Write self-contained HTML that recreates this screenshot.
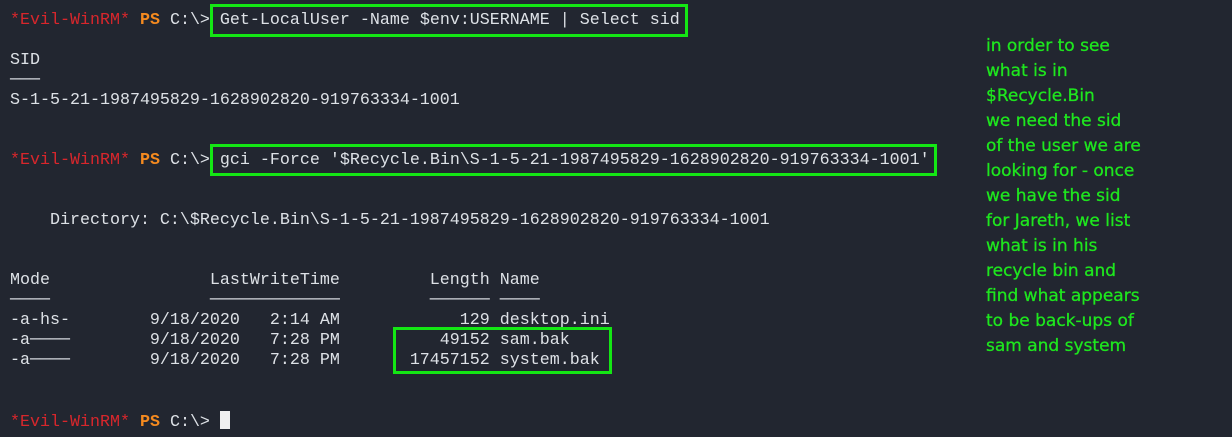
<!DOCTYPE html>
<html><head><meta charset="utf-8"><style>
html,body{margin:0;padding:0;background:#222630;width:1232px;height:437px;overflow:hidden;position:relative}
pre{position:absolute;left:10px;top:11px;margin:0;font-family:"Liberation Mono","DejaVu Sans Mono",monospace;font-size:16.67px;line-height:20px;color:#dde1e6}
.r{color:#d8262c}.o{color:#f58a1f;font-weight:bold}
.box{position:absolute;border:3px solid #14e614;box-sizing:border-box}
.note{position:absolute;left:986px;top:34px;font-family:"DejaVu Sans","Liberation Sans",sans-serif;font-size:17px;line-height:25px;color:#1ee61e;white-space:pre;-webkit-text-stroke:0.3px #1ee61e}
.cur{display:inline-block;width:10px;height:18px;background:#f0f0f0;vertical-align:-3px}
</style></head><body>
<pre><span class="r">*Evil-WinRM*</span> <span class="o">PS</span> C:\&gt; Get-LocalUser -Name $env:USERNAME | Select sid

SID
───
S-1-5-21-1987495829-1628902820-919763334-1001


<span class="r">*Evil-WinRM*</span> <span class="o">PS</span> C:\&gt; gci -Force '$Recycle.Bin\S-1-5-21-1987495829-1628902820-919763334-1001'


    Directory: C:\$Recycle.Bin\S-1-5-21-1987495829-1628902820-919763334-1001


Mode                LastWriteTime         Length Name
────                ─────────────         ────── ────
-a-hs-        9/18/2020   2:14 AM            129 desktop.ini
-a────        9/18/2020   7:28 PM          49152 sam.bak
-a────        9/18/2020   7:28 PM       17457152 system.bak


<span class="r">*Evil-WinRM*</span> <span class="o">PS</span> C:\&gt; <span class="cur"></span></pre>
<div class="box" style="left:210px;top:4px;width:478px;height:33px"></div>
<div class="box" style="left:210px;top:144px;width:727px;height:32px"></div>
<div class="box" style="left:393px;top:327px;width:219px;height:47px"></div>
<div class="note">in order to see
what is in
$Recycle.Bin
we need the sid
of the user we are
looking for - once
we have the sid
for Jareth, we list
what is in his
recycle bin and
find what appears
to be back-ups of
sam and system</div>
</body></html>
